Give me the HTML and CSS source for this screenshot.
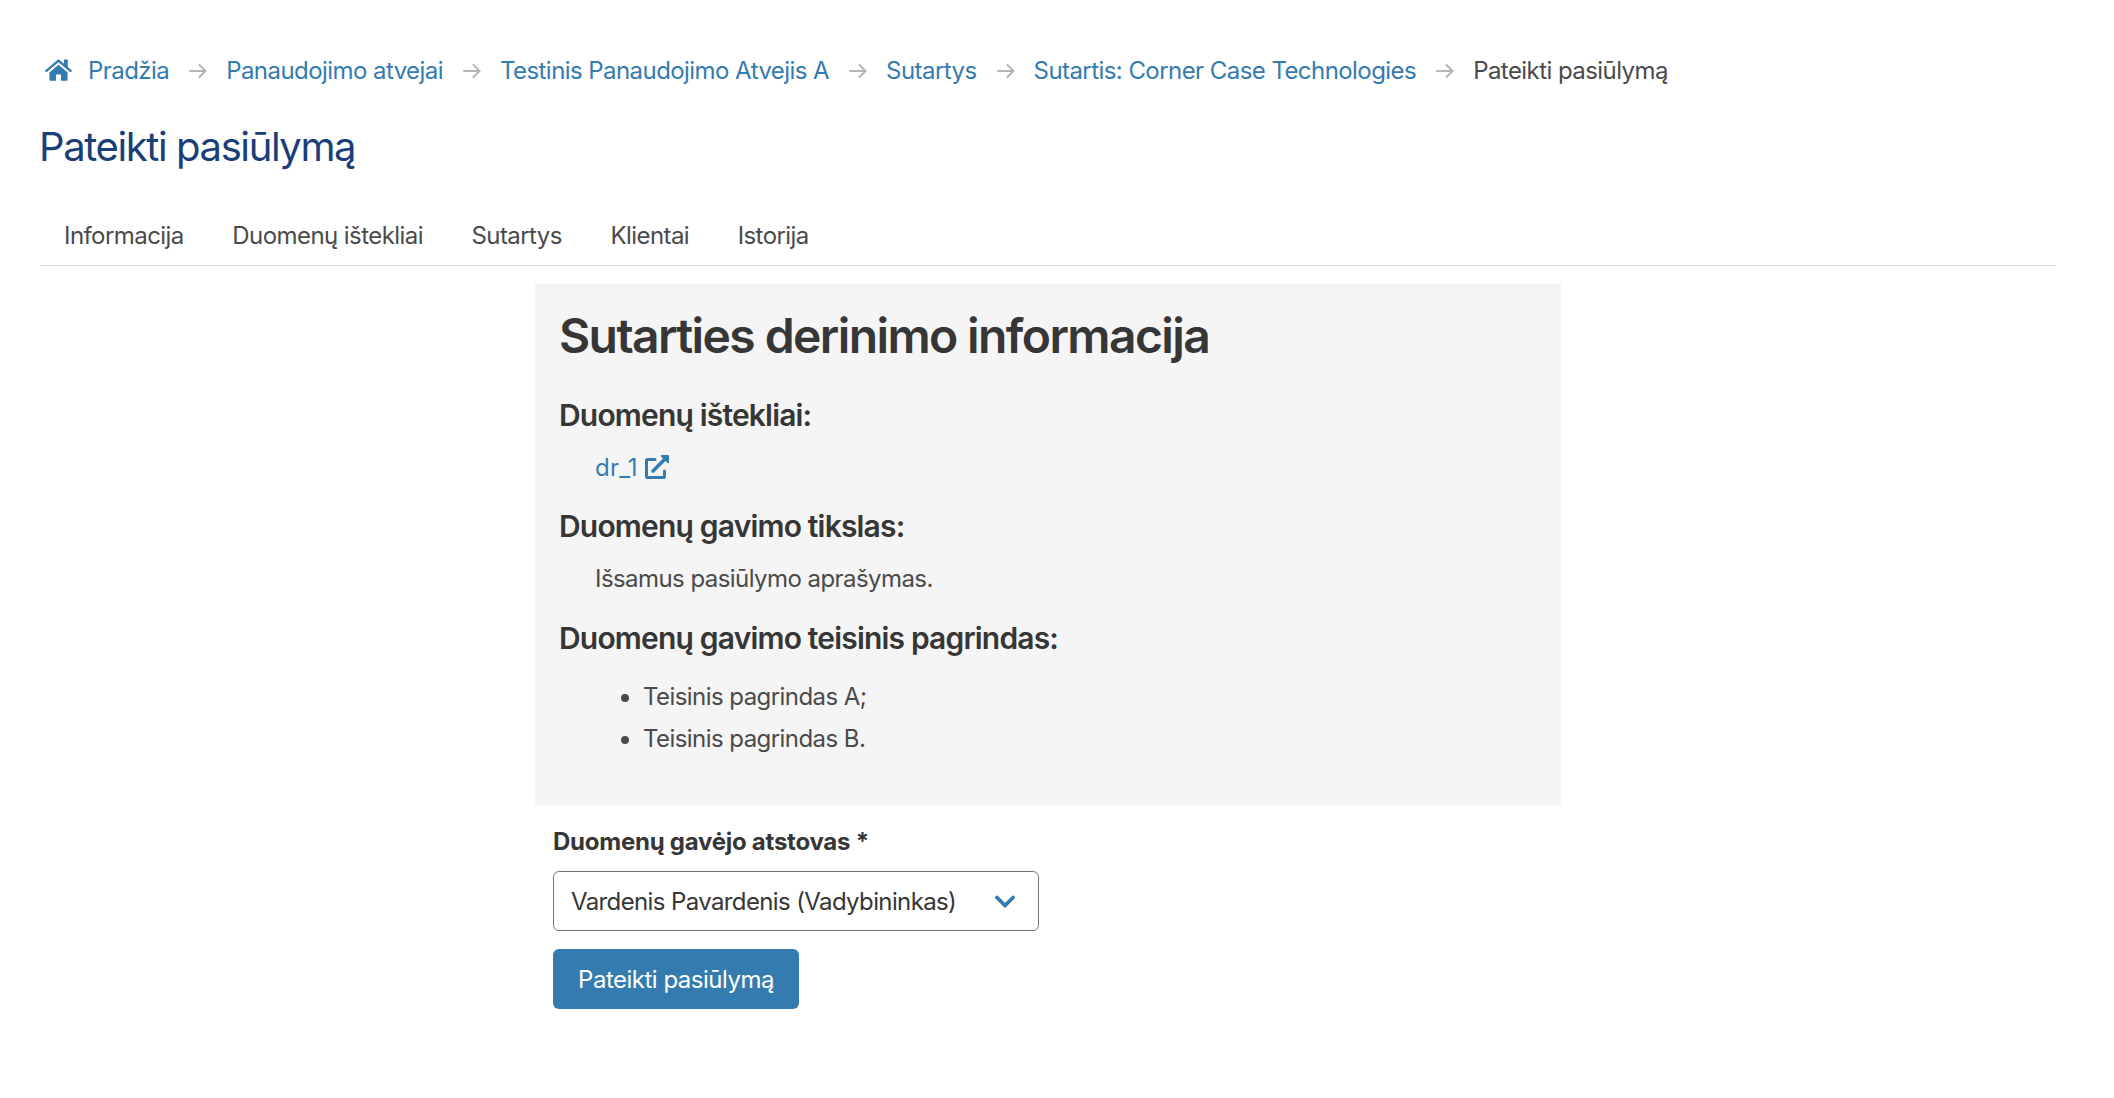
FILE: index.html
```html
<!DOCTYPE html>
<html lang="lt">

<head>
    <meta charset="UTF-8">
    <meta name="viewport" content="width=device-width, initial-scale=1.0">
    <title>Pateikti pasiūlymą</title>

    <link rel="stylesheet" href="styles.css">
</head>

<body>
    <div class="container">
        <nav class="breadcrumb">
            <ul>
                <li>
                    <a href="#" class="home">
                        <svg class="icon-home" viewBox="0 0 27 22">
                            <path d="M1.4 11.8 L13.5 1.6 L25.6 11.8" fill="none" stroke="currentColor" stroke-width="2.4" stroke-linecap="round" stroke-linejoin="round" />
                            <path d="M19 .5h3.8v8.5L19 5.8z" fill="currentColor" />
                            <path d="M13.5 5.8 L22.6 13.4 V21 a.8.8 0 0 1-.8.8 H16 V15.6 H11 V21.8 H5.2 a.8.8 0 0 1-.8-.8 V13.4z" fill="currentColor" />
                        </svg>
                        <span>Pradžia</span>
                    </a>
                </li>
                <li><svg class="arrow" viewBox="0 0 18 14"><path d="M1 7h15.5M10.5 1l6 6-6 6" /></svg><a href="#">Panaudojimo atvejai</a></li>
                <li><svg class="arrow" viewBox="0 0 18 14"><path d="M1 7h15.5M10.5 1l6 6-6 6" /></svg><a href="#">Testinis Panaudojimo Atvejis A</a></li>
                <li><svg class="arrow" viewBox="0 0 18 14"><path d="M1 7h15.5M10.5 1l6 6-6 6" /></svg><a href="#">Sutartys</a></li>
                <li><svg class="arrow" viewBox="0 0 18 14"><path d="M1 7h15.5M10.5 1l6 6-6 6" /></svg><a href="#">Sutartis: Corner Case Technologies</a></li>
                <li class="is-active"><svg class="arrow" viewBox="0 0 18 14"><path d="M1 7h15.5M10.5 1l6 6-6 6" /></svg><a href="#">Pateikti pasiūlymą</a></li>
            </ul>
        </nav>

        <h1 class="page-title">Pateikti pasiūlymą</h1>

        <div class="tabs">
            <ul>
                <li><a href="#">Informacija</a></li>
                <li><a href="#">Duomenų ištekliai</a></li>
                <li><a href="#">Sutartys</a></li>
                <li><a href="#">Klientai</a></li>
                <li><a href="#">Istorija</a></li>
            </ul>
        </div>

        <div class="column">
            <div class="content">
                <h1>Sutarties derinimo informacija</h1>

                <h2>Duomenų ištekliai:</h2>
                <p>
                    <a href="#" class="resource">dr_1<svg class="icon-external" viewBox="0 0 24 24">
                            <path d="M10 4.5H2.8A1.3 1.3 0 0 0 1.5 5.8V21.2A1.3 1.3 0 0 0 2.8 22.5H18.2A1.3 1.3 0 0 0 19.5 21.2V16" fill="none" stroke="currentColor" stroke-width="3" stroke-linecap="round" />
                            <path d="M8 16L19.5 4.5" stroke="currentColor" stroke-width="3.6" stroke-linecap="round" />
                            <path d="M16.5 0H23a1 1 0 0 1 1 1V7.5a.8.8 0 0 1-1.4.5L16 1.4a.8.8 0 0 1 .5-1.4z" fill="currentColor" />
                        </svg></a>
                </p>

                <h2>Duomenų gavimo tikslas:</h2>
                <p>Išsamus pasiūlymo aprašymas.</p>

                <h2>Duomenų gavimo teisinis pagrindas:</h2>
                <ul>
                    <li>Teisinis pagrindas A;</li>
                    <li>Teisinis pagrindas B.</li>
                </ul>
            </div>

            <form class="form">
                <label class="label">Duomenų gavėjo atstovas *</label>
                <div class="select">
                    <span>Vardenis Pavardenis (Vadybininkas)</span>
                    <svg class="chevron" viewBox="0 0 20 13"><path d="M2 2.5l8 8 8-8" /></svg>
                </div>
                <button type="button" class="button">Pateikti pasiūlymą</button>
            </form>
        </div>
    </div>
</body>

</html>
```
FILE: styles.css
```css
* {
    margin: 0;
    padding: 0;
    box-sizing: border-box;
}

body {
    font-family: Inter, "Liberation Sans", sans-serif;
    font-size: 24px;
    line-height: 36px;
    letter-spacing: -0.56px;
    color: #4a4a4a;
    background: #fff;
}

a {
    color: #347bb0;
    text-decoration: none;
}

svg {
    display: block;
    flex: none;
}

.container {
    width: 2016px;
    margin-left: 40px;
    padding-top: 53px;
}

/* breadcrumb */
.breadcrumb ul,
.breadcrumb li,
.home {
    display: flex;
    align-items: center;
    list-style: none;
    white-space: nowrap;
}

.home {
    margin-left: 5px;
    gap: 16px;
}

.icon-home {
    width: 27px;
    height: 22px;
    margin-bottom: 2px;
}

.arrow {
    width: 18px;
    height: 14px;
    margin: 0 19px 1px 20px;
    fill: none;
    stroke: #b5b5b5;
    stroke-width: 2;
    stroke-linecap: round;
}

.breadcrumb .is-active a {
    color: #4a4a4a;
}

.page-title {
    margin: 35px 0 0 -1px;
    font-size: 40px;
    font-weight: 400;
    line-height: 45px;
    letter-spacing: -1.4px;
    color: #1a3e78;
}

/* tabs */
.tabs {
    margin-top: 49px;
    border-bottom: 1px solid #dbdbdb;
}

.tabs ul {
    display: flex;
    list-style: none;
}

.tabs a {
    display: block;
    padding: 0 24.5px 11px 24px;
    color: #4a4a4a;
}

.column {
    width: 1026px;
    margin: 18px 0 0 495px;
}

.content {
    height: 521px;
    padding: 25px 24px 24px;
    background: #f5f5f5;
}

.content h1,
.content h2 {
    color: #363636;
    font-weight: 600;
}

.content h1 {
    font-size: 48px;
    line-height: 54px;
    letter-spacing: -1.6px;
    margin-bottom: 35px;
}

.content h2 {
    font-size: 30px;
    line-height: 34px;
    letter-spacing: -0.82px;
    margin-bottom: 18px;
}

.content p {
    margin: 0 0 23.4px 36px;
}

.resource {
    display: flex;
    align-items: center;
    gap: 7px;
    letter-spacing: 0.2px;
}

.icon-external {
    width: 24px;
    height: 24px;
    margin-bottom: 2px;
}

.content ul {
    margin: 24.5px 0 0 84px;
}

.content li + li {
    margin-top: 6px;
}

/* form */
.form {
    padding: 19px 18px 18px;
}

.label {
    display: block;
    margin-bottom: 11px;
    color: #363636;
    font-weight: 700;
    letter-spacing: -0.25px;
}

.select {
    display: flex;
    align-items: center;
    justify-content: space-between;
    width: 486px;
    height: 60px;
    padding: 1px 23px 0 17px;
    border: 1px solid #757575;
    border-radius: 6px;
    color: #363636;
    letter-spacing: -0.62px;
    white-space: nowrap;
}

.chevron {
    width: 20px;
    height: 13px;
    margin-bottom: 1px;
    fill: none;
    stroke: #347bb0;
    stroke-width: 3.8;
    stroke-linecap: round;
}

.button {
    width: 246px;
    height: 60px;
    margin-top: 18px;
    padding-top: 2px;
    border: none;
    border-radius: 6px;
    background: #347bb0;
    color: #fff;
    font: inherit;
    letter-spacing: -0.5px;
    white-space: nowrap;
}
```
